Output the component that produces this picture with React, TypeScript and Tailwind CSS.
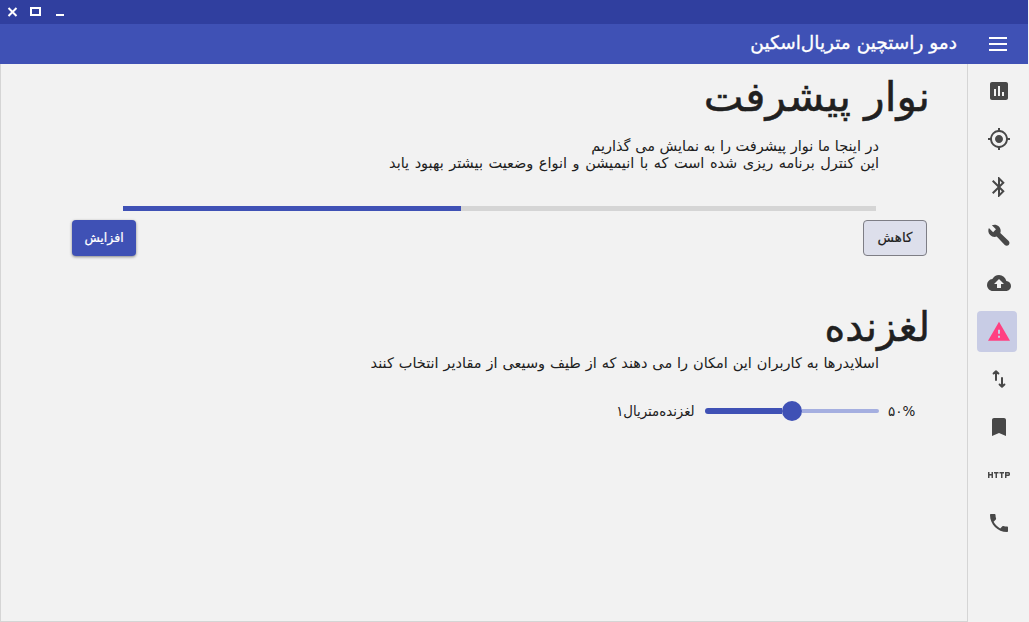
import React, { useState } from 'react';
import {
  MdAssessment,
  MdBackup,
  MdBluetooth,
  MdBookmark,
  MdGpsFixed,
  MdHttp,
  MdPhone,
  MdWarning,
} from 'react-icons/md';

type IconProps = { size?: number; className?: string };

function Wrench({ size, className }: IconProps) {
  return (
    <svg width={size} height={size} viewBox="0 0 24 24" fill="currentColor" className={className}>
      <path
        transform="translate(0.4 0.6) scale(0.95)"
        d="M22.4 18.2l-8.8-8.3c.9-2.3.4-5-1.5-6.9-2-2-5-2.4-7.4-1.3L9 6 6 9 1.6 4.7C.4 7.1.9 10.1 2.9 12.1c1.9 1.9 4.6 2.4 6.9 1.5l8.5 8.8c1.1 1.1 3 1.1 4.1 0s1.1-3.1 0-4.2z"
      />
    </svg>
  );
}

function SwapArrows({ size, className }: IconProps) {
  return (
    <svg
      width={size}
      height={size}
      viewBox="0 0 24 24"
      fill="none"
      stroke="currentColor"
      strokeWidth="2"
      strokeLinecap="round"
      strokeLinejoin="round"
      className={className}
    >
      <path d="M9 13V4.6M6.6 6.5L9 4.3l2.4 2.2" />
      <path d="M15 11v8.4M12.6 17.5l2.4 2.2 2.4-2.2" />
    </svg>
  );
}

function Warning({ size, className }: IconProps) {
  return <MdWarning size={size} className={className} viewBox="0 -0.8 24 24" />;
}

const items = [
  MdAssessment,
  MdGpsFixed,
  MdBluetooth,
  Wrench,
  MdBackup,
  Warning,
  SwapArrows,
  MdBookmark,
  MdHttp,
  MdPhone,
];

function TitleBar() {
  return (
    <div dir="ltr" className="h-6 bg-[#303f9f]">
      <svg width="72" height="24" fill="none" stroke="white" strokeWidth="2">
        <path d="M8.5 8l8 8M16.5 8l-8 8" />
        <path d="M31 8h9v7h-9z" />
        <path d="M56 15h8" />
      </svg>
    </div>
  );
}

function Header() {
  return (
    <header className="flex h-10 items-center bg-[#3f51b5] pr-[21px] text-white">
      <svg width="18" height="14" fill="white">
        <path d="M0 0h18v2H0zM0 6h18v2H0zM0 12h18v2H0z" />
      </svg>
      <h1 className="mr-8 -mt-[3px] text-[18.5px] leading-6 whitespace-nowrap [-webkit-text-stroke:0.3px_white]">
        دمو راستچین متریال‌اسکین
      </h1>
    </header>
  );
}

function Sidebar() {
  const [active, setActive] = useState(5);
  return (
    <nav className="flex w-[60px] shrink-0 flex-col items-center gap-[7px] pt-[7px] pr-[2px]">
      {items.map((Icon, i) => (
        <button
          key={i}
          onClick={() => setActive(i)}
          className={
            i === active
              ? 'flex h-[41px] w-10 items-start justify-center rounded bg-[#c8cce5] pt-2 pl-1 text-[#ff4081]'
              : 'flex h-[41px] w-10 items-start justify-center pt-2 pl-1 text-[#484848]'
          }
        >
          <Icon size={24} className="shrink-0" />
        </button>
      ))}
    </nav>
  );
}

export default function App() {
  return (
    <div
      dir="rtl"
      lang="fa"
      className="flex h-[622px] w-[1029px] flex-col overflow-hidden bg-[#f2f2f2] font-['DejaVu_Sans',sans-serif] text-[#202020]"
    >
      <div className="mr-px">
        <TitleBar />
        <Header />
      </div>
      <div className="mr-px flex flex-1">
        <Sidebar />
        <main className="flex-1 border-x border-b border-[#d5d5d5]">
          <h2 className="mr-[37px] mt-[7px] h-[65px] origin-right scale-x-[1.03] text-[41px] leading-[52px] whitespace-nowrap [-webkit-text-stroke:0.5px_#202020]">
            نوار پیشرفت
          </h2>
          <div className="mr-[88px] mt-[2px] text-[14.5px] leading-[17px] whitespace-nowrap">
            <p>در اینجا ما نوار پیشرفت را به نمایش می گذاریم</p>
            <p className="[word-spacing:0.9px]">
              این کنترل برنامه ریزی شده است که با انیمیشن و انواع وضعیت بیشتر بهبود یابد
            </p>
          </div>
          <div className="mr-[91px] mt-[34px] flex h-[5px] w-[753px] justify-end bg-[#d5d5d5]">
            <div className="w-[338px] bg-[#3f51b5]" />
          </div>
          <div className="mt-[9px] flex justify-between pr-10 pl-[71px] text-[12.5px] [-webkit-text-stroke:0.2px_currentColor]">
            <button className="h-9 w-16 rounded border border-[#7e7e85] bg-[#dddfeb] pb-0.5 text-[13.5px]">کاهش</button>
            <button className="h-9 w-16 rounded bg-[#3f51b5] text-white shadow-[0_1px_3px_rgba(0,0,0,0.45)]">
              افزایش
            </button>
          </div>
          <h2 className="mr-[37px] mt-[45px] h-[54px] origin-right scale-x-[0.965] text-[41px] leading-[52px] whitespace-nowrap [-webkit-text-stroke:0.5px_#202020]">
            لغزنده
          </h2>
          <p className="mr-[88px] text-[14.5px] leading-[17px] whitespace-nowrap [word-spacing:0.3px]">
            اسلایدرها به کاربران این امکان را می دهند که از طیف وسیعی از مقادیر انتخاب کنند
          </p>
          <div className="mr-[52px] mt-[29px] flex h-5 items-center text-[14px]">
            <span dir="ltr" className="w-[27px] text-[13.5px] whitespace-nowrap">۵۰%</span>
            <div className="mr-[9px] flex w-[174px] items-center">
              <div className="h-1 flex-1 rounded-r-full bg-[#a5afe0]" />
              <div className="size-5 rounded-full bg-[#3f51b5]" />
              <div className="h-1.5 flex-1 rounded-l-full bg-[#3f51b5]" />
            </div>
            <span className="mr-[10px] origin-right scale-x-[0.95] whitespace-nowrap">لغزنده‌متریال۱</span>
          </div>
        </main>
      </div>
    </div>
  );
}
